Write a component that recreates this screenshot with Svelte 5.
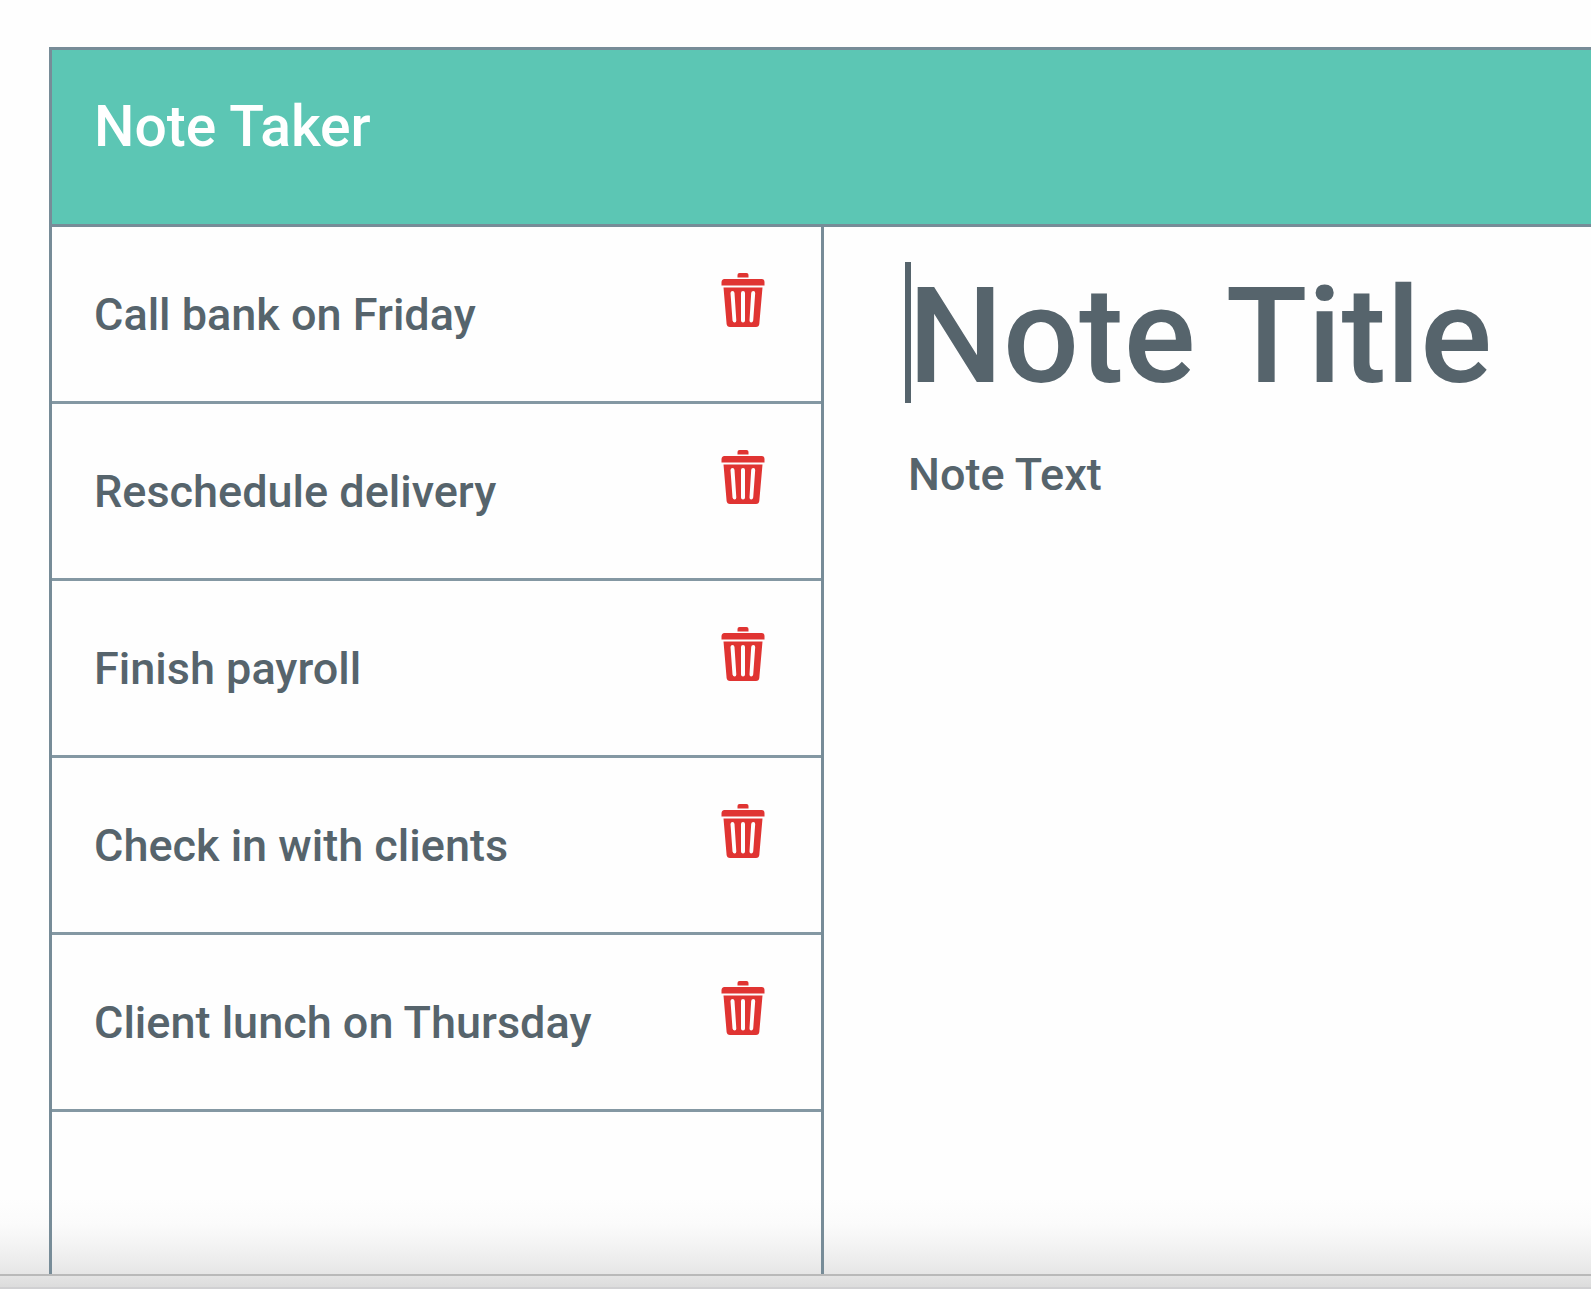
<script>
  let notes = $state([
    'Call bank on Friday',
    'Reschedule delivery',
    'Finish payroll',
    'Check in with clients',
    'Client lunch on Thursday'
  ]);
  let title = $state('Note Title');
  let text = $state('Note Text');

  function remove(index) {
    notes.splice(index, 1);
  }
</script>

<div class="page">
  <div class="app">
    <header class="header">
      <h1>Note Taker</h1>
    </header>
    <div class="body">
      <ul class="list">
        {#each notes as note, i}
          <li class="item">
            <a class="name" href="#note">{note}</a>
            <button class="delete" type="button" aria-label={`Delete ${note}`} onclick={() => remove(i)}>
              <svg viewBox="0 0 44 55" width="44" height="55" aria-hidden="true">
                <path d="M16.500 4.500V2Q16.500 0 18.500 0H25.500Q27.500 0 27.500 2V4.500Z" />
                <path d="M3.500 6H40.500Q43.500 6 43.500 9.500V12.500H.5V9.500Q.5 6 3.500 6Z" />
                <path
                  fill-rule="evenodd"
                  d="M2.500 14.500H41.500L38.300 51Q38 54 35 54H9Q6 54 5.600 51ZM9.500 20L11.500 47.500Q12 49.500 13.700 49.500T15.300 47.500L13.500 20Q13.300 18 11.500 18T9.500 20ZM20 20V47.500Q20 49.500 22 49.500T24 47.500V20Q24 18 22 18T20 20ZM30.200 20L28.500 47.500Q28.500 49.500 30.200 49.500T32.200 47.500L34.200 20Q34.200 18 32.300 18T30.200 20Z"
                />
              </svg>
            </button>
          </li>
        {/each}
      </ul>
      <main class="editor">
        <div class="title-field">
          <input class="title" type="text" aria-label="Note title" bind:value={title} />
          <span class="caret"></span>
        </div>
        <textarea class="text" aria-label="Note text" bind:value={text}></textarea>
      </main>
    </div>
  </div>
  <footer class="edge"></footer>
</div>

<style>
  :global(body) {
    margin: 0;
    background: #fefefe;
  }
  .page {
    display: flex;
    flex-direction: column;
    min-height: 100vh;
    overflow: hidden;
    box-sizing: border-box;
    font-family: Roboto, 'Liberation Sans', sans-serif;
    font-weight: 500;
    color: #56646c;
  }
  .app {
    flex: 1;
    display: flex;
    flex-direction: column;
    padding: 47px 0 0 49px;
    background: linear-gradient(to top, #e6e6e6 0, #f3f3f3 28px, #fbfbfb 50px, #fefefe 76px);
  }
  .header {
    box-sizing: border-box;
    height: 180px;
    padding: 44px 42px;
    border: 3px solid #778c98;
    border-right: 0;
    background: #5cc6b4;
  }
  h1 {
    margin: 0;
    font-size: 57px;
    line-height: 66px;
    font-weight: 500;
    color: #fff;
  }
  .body {
    flex: 1;
    display: grid;
    grid-template-columns: minmax(0, 153fr) minmax(0, 152fr);
    border-left: 3px solid #778c98;
  }
  .list {
    margin: 0;
    padding: 0;
    list-style: none;
    border-right: 3px solid #778c98;
  }
  .item {
    display: flex;
    align-items: flex-start;
    justify-content: space-between;
    box-sizing: border-box;
    height: 177px;
    padding: 46px 56px 0 42px;
    border-bottom: 3px solid #8498a3;
  }
  .name {
    color: inherit;
    text-decoration: none;
    font-size: 45px;
    line-height: 84px;
    white-space: nowrap;
  }
  .delete {
    padding: 0;
    border: 0;
    background: none;
    cursor: pointer;
  }
  .delete svg {
    display: block;
    fill: #e03432;
  }
  .editor {
    display: flex;
    flex-direction: column;
    gap: 32px;
    padding: 31px 0 0 84px;
  }
  .title-field {
    position: relative;
  }
  .title,
  .text {
    display: block;
    box-sizing: border-box;
    width: 100%;
    margin: 0;
    padding: 0;
    border: 0;
    outline: 0;
    background: none;
    font: inherit;
    color: inherit;
  }
  .title {
    height: 158px;
    font-size: 134px;
    line-height: 158px;
  }
  .caret {
    position: absolute;
    left: -3px;
    top: 4px;
    width: 6px;
    height: 141px;
    background: #56646c;
  }
  .text {
    flex: 1;
    resize: none;
    font-size: 45px;
    line-height: 54px;
  }
  .edge {
    box-sizing: border-box;
    height: 15px;
    border-top: 2px solid #b9b9b9;
    border-bottom: 2px solid #d0d0d2;
    background: linear-gradient(#e4e4e4, #dcdcdc);
  }
</style>
